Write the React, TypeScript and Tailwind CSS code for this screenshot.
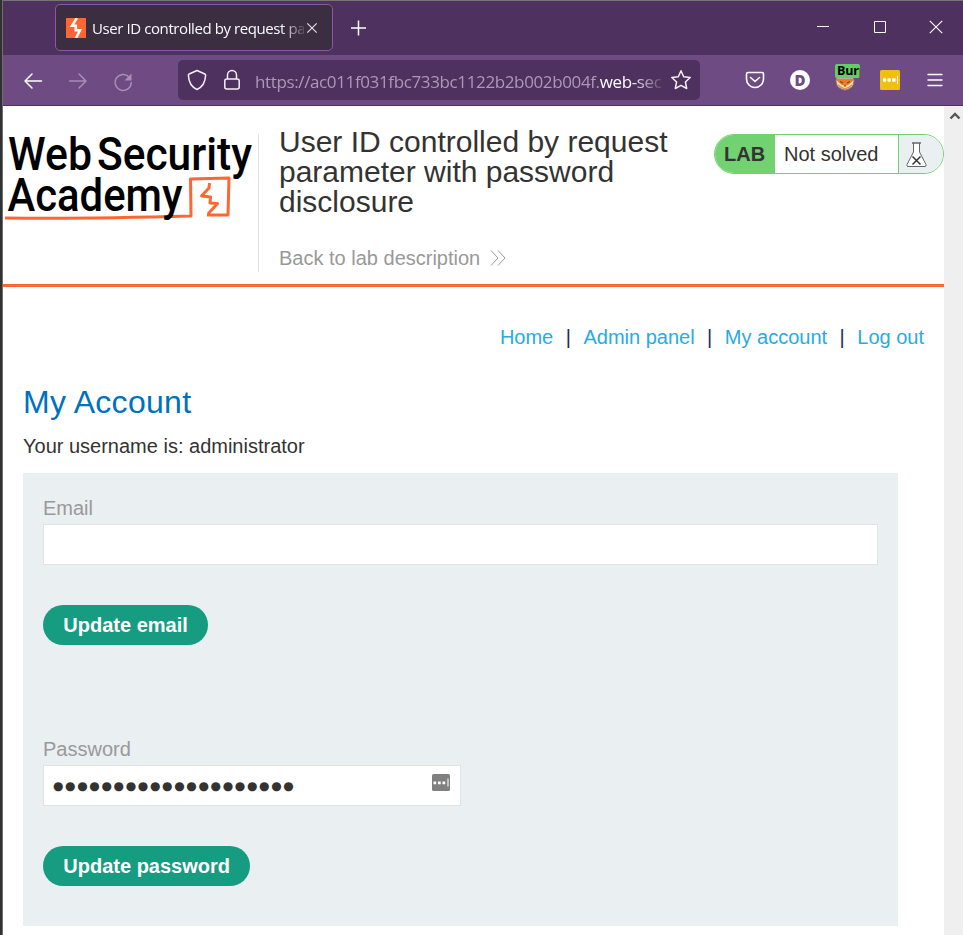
import React from 'react';

const navItems = ['Home', 'Admin panel', 'My account', 'Log out'];

function BoltGlyph() {
  return (
    <svg width="20" height="20" viewBox="0 0 20 20" className="shrink-0">
      <rect width="20" height="20" rx="0.5" fill="#ff6633" />
      <path d="M10.800 0 L6 7.800 H9.800 V12.200 H14 L10 20" fill="none" stroke="#fff" strokeWidth="2.500" />
    </svg>
  );
}

function TabStrip() {
  return (
    <div className="flex h-[54px] shrink-0 bg-[#4f315f]">
      <div className="ml-[52px] mt-[3px] flex h-[47px] w-[278px] items-center rounded-[5px] border border-[#8b56a8] bg-[#3b2e40] pl-[10px]">
        <BoltGlyph />
        <div className="ml-[6px] w-[212px] overflow-hidden whitespace-nowrap font-['Open_Sans',sans-serif] text-[15px] leading-6 tracking-[-0.41px] text-[#fbfbfe] [mask-image:linear-gradient(to_right,#000_89%,transparent_102%)]">
          User ID controlled by request para
        </div>
        <svg width="12" height="12" viewBox="0 0 12 12" className="ml-[2px] shrink-0">
          <path d="M1.3 1.3l9.4 9.4M10.7 1.3l-9.4 9.4" stroke="#e4dfe7" strokeWidth="1.2" />
        </svg>
      </div>
      <svg width="16" height="16" viewBox="0 0 16 16" className="ml-[17px] mt-[19px]">
        <path d="M8.500 .5v15M1 8h15" stroke="#fff" strokeWidth="1.500" />
      </svg>
      <div className="ml-auto mr-[20px] mt-[19px] flex gap-[43px]">
        <svg width="14" height="14" viewBox="0 0 14 14">
          <path d="M2 6.5h12" stroke="#fff" />
        </svg>
        <svg width="14" height="14" viewBox="0 0 14 14">
          <path d="M2.500 1.500h11v11h-11z" fill="none" stroke="#fff" />
        </svg>
        <svg width="14" height="14" viewBox="0 0 14 14">
          <path d="M.8.8l12.4 12.4M13.2.8.8 13.2" stroke="#fff" strokeWidth="1.1" />
        </svg>
      </div>
    </div>
  );
}

function Toolbar() {
  return (
    <div className="flex h-[51px] shrink-0 items-center border-b border-[#4f315f] bg-[#6f4b84]">
      <svg width="20" height="20" viewBox="0 0 20 20" className="ml-5 mt-px" fill="none" stroke="#fff" strokeWidth="1.5">
        <path d="M18.5 10H2M9 3l-7 7 7 7" strokeLinecap="round" strokeLinejoin="round" />
      </svg>
      <svg width="20" height="20" viewBox="0 0 20 20" className="ml-[25px] mt-px" fill="none" stroke="#a78fb4" strokeWidth="1.5">
        <path d="M1.5 10H18M11 3l7 7-7 7" strokeLinecap="round" strokeLinejoin="round" />
      </svg>
      <svg width="20" height="20" viewBox="0 0 20 20" className="ml-[25px] mt-[3px]" fill="none" stroke="#a78fb4" strokeWidth="1.5">
        <path d="M16.2 5.2A8 8 0 1 0 18.2 10.5" strokeLinecap="round" />
        <path d="M18.5 1.5v7h-7z" fill="#a78fb4" stroke="none" />
      </svg>
      <div className="ml-[45px] flex h-10 w-[522px] items-center rounded-[5px] bg-[#4f315f] pl-[9px]">
        <svg width="20" height="22" viewBox="0 0 20 22" fill="none" stroke="#f4f0f6" strokeWidth="1.5" strokeLinejoin="round">
          <path d="M10 1.5 17.8 5q.9.4.8 1.4C18.300 13.500 15.500 18 10 20.500 4.500 18 1.700 13.500 1.400 6.400 1.300 5.400 1.600 5.200 2.200 5z" />
        </svg>
        <svg width="18" height="22" viewBox="0 0 18 22" className="ml-4" fill="none" stroke="#f4f0f6" strokeWidth="1.5">
          <rect x="1.8" y="10" width="14.4" height="10" rx="2" />
          <path d="M4.500 10V6a4.500 4.500 0 0 1 9 0v4" />
        </svg>
        <div className="ml-[14px] mt-[3px] w-[407px] overflow-hidden whitespace-nowrap font-['Open_Sans',sans-serif] text-[17px] leading-7 tracking-[-0.37px] text-[#ad98b7] [mask-image:linear-gradient(to_right,#000_92%,transparent_101%)]">
          https://ac011f031fbc733bc1122b2b002b004f.<span className="font-medium text-white">web-security</span>
        </div>
        <svg width="22" height="22" viewBox="0 0 22 22" className="ml-[8px] shrink-0" fill="none" stroke="#f4f0f6" strokeWidth="1.5" strokeLinejoin="round">
          <path d="m11 1.800 2.700 6 6.500.700-4.800 4.500 1.300 6.500-5.700-3.200-5.700 3.200 1.300-6.500L1.800 8.500l6.500-.7z" />
        </svg>
      </div>
      <svg width="20" height="18" viewBox="0 0 20 18" className="ml-[45px]" fill="none" stroke="#fff" strokeWidth="1.6">
        <path d="M3 1.500h14q1.500 0 1.500 1.500v5a8.500 8.500 0 0 1-17 0V3Q1.500 1.500 3 1.500z" />
        <path d="m5.500 6.500 4.500 4 4.500-4" strokeLinecap="round" strokeLinejoin="round" />
      </svg>
      <div className="ml-[25px] flex h-5 w-5 items-center justify-center rounded-full bg-white font-['Open_Sans',sans-serif] text-[15px] font-extrabold text-[#6f4b84]">D</div>
      <div className="relative ml-[25px] h-[26px] w-[25px]">
        <svg width="20" height="20" viewBox="0 0 20 20" className="mt-[4px]">
          <circle cx="10" cy="10" r="9" fill="#b9a9a5" stroke="#97786b" strokeWidth="1" />
          <path d="M1.500 8h17l-2 6-6.500 4-6.500-4z" fill="#ef7b22" />
          <path d="M1.500 9.500 7 14l3 1 3-1 5.500-4.500-1.500 6-7 3-7-3z" fill="#ffe0b5" />
          <path d="M3 14q7 7 14 0" fill="none" stroke="#ec8b3d" strokeWidth="1.200" />
          <path d="m5 10.500 3 1.500m7-1.500-3 1.500M9 15h2" stroke="#784421" strokeWidth="1.200" />
        </svg>
        <div className="absolute left-0 top-[-3px] h-[14px] w-[25px] overflow-hidden rounded-[2px] bg-[#66cc66] pl-[2px] font-['Open_Sans',sans-serif] text-[12.500px] font-bold leading-[13px] tracking-[-0.2px] text-black">Burp</div>
      </div>
      <svg width="20" height="20" viewBox="0 0 20 20" className="ml-5">
        <rect width="20" height="20" rx="1.500" fill="#f0c010" />
        <g fill="#fff"><circle cx="4.500" cy="10" r="1.900" /><circle cx="9.200" cy="10" r="1.900" /><circle cx="13.900" cy="10" r="1.900" /><path d="M17 6h1v8h-1z" /></g>
      </svg>
      <svg width="16" height="14" viewBox="0 0 16 14" className="ml-[27px] -mt-px">
        <path d="M1 1.500h14M1 7h14M1 12.500h14" stroke="#fff" strokeWidth="1.400" strokeLinecap="round" />
      </svg>
    </div>
  );
}

function AcademyLogo() {
  return (
    <svg width="255" height="100" viewBox="3 130 255 100" className="mt-6 shrink-0 font-['Roboto',sans-serif] font-medium" fill="#000">
      <text x="8" y="170" fontSize="47" textLength="84" lengthAdjust="spacingAndGlyphs">Web</text>
      <text x="97" y="170" fontSize="47" textLength="155" lengthAdjust="spacingAndGlyphs">Security</text>
      <g fill="none" stroke="#ff6633" strokeLinejoin="round">
        <path d="M5 218Q85 219 191 216L190.500 179l38.500-1-1 37H207" strokeWidth="3" />
        <path d="m209.500 183-.5 5-7.500 8 9 1-.5 6 7.500.5-9.500 10.500" strokeWidth="3" />
      </g>
      <text x="7.500" y="210.500" fontSize="47" textLength="175" lengthAdjust="spacingAndGlyphs">Academy</text>
    </svg>
  );
}

function LabStatus() {
  return (
    <div className="mt-7 ml-auto flex h-10 w-[230px] shrink-0 overflow-hidden rounded-full border border-[#72d272] bg-white text-[20px] leading-[38px]">
      <div className="w-[60px] bg-[#72d272] pl-[9px] font-bold">LAB</div>
      <div className="w-[123px] pl-[9px]">Not solved</div>
      <div className="flex-1 border-l border-[#72d272] bg-[#eaeff2] pl-[7px] pt-[7px]">
        <svg width="21" height="26" viewBox="0 0 21 26" fill="#fff" stroke="#666" strokeWidth="1">
          <path d="M7.500 1v9L1 22.500Q.5 24.500 2 24.500h17q1.500 0 1-2L13.500 10V1" />
          <path d="M6 1h9" strokeWidth="1.500" />
          <path d="m6.500 14.500 8 8m0-8-8 8" stroke="#333" strokeWidth="1.500" />
        </svg>
      </div>
    </div>
  );
}

function Button({ children }: { children: React.ReactNode }) {
  return <button className="block h-10 rounded-full bg-[#169c80] px-[20.300px] text-[20px] font-bold leading-10 text-white">{children}</button>;
}

export default function App() {
  return (
    <div className="flex h-[935px] w-[963px] overflow-hidden bg-[#333437] font-['Liberation_Sans',Arial,sans-serif] text-[20px] leading-6 text-[#333332]">
      <div className="w-[3px] shrink-0 border-r border-[#6f6f70] bg-[#303133]" />
      <div className="flex w-[960px] flex-col border-t border-[#757575]">
        <TabStrip />
        <Toolbar />
        <div className="flex flex-1">
          <main className="w-[941px] bg-white">
            <header className="flex h-[181px] border-b-[3px] border-[#ff6633]">
              <AcademyLogo />
              <div className="mt-7 h-[138px] w-px bg-[#e0e0e0]" />
              <div className="ml-5 mt-[21px] w-[420px]">
                <h1 className="text-[30px] leading-[30px]">
                  User ID controlled by request<br />parameter with password<br />disclosure
                </h1>
                <a className="mt-[29px] flex items-center text-[#999]">
                  Back to lab description
                  <svg width="16" height="16" viewBox="0 0 16 16" className="ml-[10px]" fill="none" stroke="#999">
                    <path d="m1 .5 7 7.500-7 7.500M8 .5 15 8l-7 7.500" />
                  </svg>
                </a>
              </div>
              <LabStatus />
            </header>
            <nav className="mt-[38px] flex justify-end pr-5 text-[#29abe2]">
              {navItems.map((item, i) => (
                <React.Fragment key={item}>
                  {i > 0 && <span className="w-[30.200px] text-center text-[#28285c]">|</span>}
                  <a>{item}</a>
                </React.Fragment>
              ))}
            </nav>
            <section className="pl-5">
              <h2 className="mt-[34px] text-[32px] leading-[38px] tracking-[0.3px] text-[#0071bc]">My Account</h2>
              <p className="mt-[13px]">Your username is: administrator</p>
              <div className="mt-[15px] h-[453px] w-[875px] bg-[#eaeff2] px-5 pt-[23px] text-[#999]">
                <label className="block">Email</label>
                <div className="mt-1 h-[41px] border border-[#e2e4e4] bg-white" />
                <div className="mt-10"><Button>Update email</Button></div>
                <label className="mt-[92px] block">Password</label>
                <div className="mt-1 flex h-[41px] w-[418px] items-center justify-between border border-[#e2e4e4] bg-white pl-[9px] pr-[10px]">
                  <span className="font-['DejaVu_Sans',sans-serif] text-[12px] tracking-[1.650px] text-[#333332]">●●●●●●●●●●●●●●●●●●●●</span>
                  <svg width="18" height="17" viewBox="0 0 18 17" className="-mt-[6px]">
                    <rect width="18" height="17" rx="1.500" fill="#808080" />
                    <path d="M1.500 7.500h2.700v2.700H1.500zM6 7.500h2.700v2.700H6zM10.500 7.500h2.700v2.700h-2.700zM15.500 4.500h1v8h-1z" fill="#fff" />
                  </svg>
                </div>
                <div className="mt-10"><Button>Update password</Button></div>
              </div>
            </section>
          </main>
          <aside className="flex w-[19px] justify-center bg-[#efefef] pt-[6px]">
            <svg width="12" height="8" viewBox="0 0 12 8" className="ml-[2px]"><path d="m1.500 6.500 4.500-4.500 4.500 4.500" fill="none" stroke="#555" strokeWidth="2.400" /></svg>
          </aside>
        </div>
      </div>
    </div>
  );
}
